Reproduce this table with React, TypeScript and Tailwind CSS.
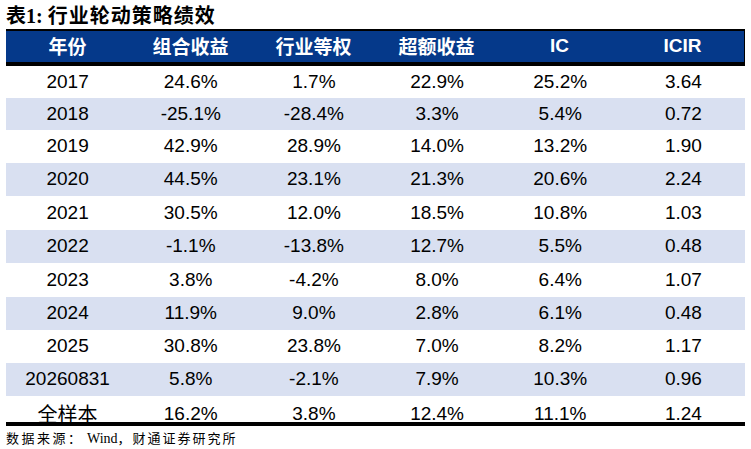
import React from "react";

const rows: { y: string; a: string; b: string; c: string; d: string; e: string; band: boolean; h: string }[] = [
  { y: "2017", a: "24.6%", b: "1.7%", c: "22.9%", d: "25.2%", e: "3.64", band: false, h: "h-[32px]" },
  { y: "2018", a: "-25.1%", b: "-28.4%", c: "3.3%", d: "5.4%", e: "0.72", band: true, h: "h-[32px]" },
  { y: "2019", a: "42.9%", b: "28.9%", c: "14.0%", d: "13.2%", e: "1.90", band: false, h: "h-[33px]" },
  { y: "2020", a: "44.5%", b: "23.1%", c: "21.3%", d: "20.6%", e: "2.24", band: true, h: "h-[33px]" },
  { y: "2021", a: "30.5%", b: "12.0%", c: "18.5%", d: "10.8%", e: "1.03", band: false, h: "h-[34px]" },
  { y: "2022", a: "-1.1%", b: "-13.8%", c: "12.7%", d: "5.5%", e: "0.48", band: true, h: "h-[33px]" },
  { y: "2023", a: "3.8%", b: "-4.2%", c: "8.0%", d: "6.4%", e: "1.07", band: false, h: "h-[34px]" },
  { y: "2024", a: "11.9%", b: "9.0%", c: "2.8%", d: "6.1%", e: "0.48", band: true, h: "h-[33px]" },
  { y: "2025", a: "30.8%", b: "23.8%", c: "7.0%", d: "8.2%", e: "1.17", band: false, h: "h-[33px]" },
  { y: "20260831", a: "5.8%", b: "-2.1%", c: "7.9%", d: "10.3%", e: "0.96", band: true, h: "h-[33px]" },
];

const cjk = "font-['Noto_Sans_CJK_SC',sans-serif]";
const num = "font-['Liberation_Sans','Noto_Sans_CJK_SC',sans-serif]";

export default function App() {
  return (
    <div className="w-[751px] h-[449px] bg-white overflow-hidden">
      <div className="h-[29px] pl-[6px] pt-[1px] leading-[28px] text-[20px] font-bold text-black whitespace-nowrap">
        <span className={cjk}>表</span>
        <span className="font-['Liberation_Serif',serif]">1: </span>
        <span className={`${cjk} tracking-[1px]`}>行业轮动策略绩效</span>
      </div>
      <div className="ml-[6px] w-[739px]">
        <div className="grid grid-cols-6 h-[37px] bg-[#05398a] border-t-2 border-b-4 border-r border-black text-white font-bold text-[19px]">
          {["年份", "组合收益", "行业等权", "超额收益"].map((t) => (
            <div key={t} className={`flex items-center justify-center ${cjk}`}>{t}</div>
          ))}
          <div className={`flex items-center justify-center ${num}`}>IC</div>
          <div className={`flex items-center justify-center ${num}`}>ICIR</div>
        </div>
        {rows.map((r) => (
          <div
            key={r.y}
            className={`grid grid-cols-6 ${r.h} ${r.band ? "bg-[#d9e0f1]" : "bg-white"} text-[19px] text-black ${num}`}
          >
            {[r.y, r.a, r.b, r.c, r.d, r.e].map((v, i) => (
              <div key={i} className="flex items-center justify-center">{v}</div>
            ))}
          </div>
        ))}
        <div className={`grid grid-cols-6 h-[30px] pt-[4px] border-b-4 border-black text-[19px] text-black ${num}`}>
          <div className={`flex items-center justify-center ${cjk} text-[20px] leading-[20px]`}>全样本</div>
          {["16.2%", "3.8%", "12.4%", "11.1%", "1.24"].map((v, i) => (
            <div key={i} className="flex items-center justify-center">{v}</div>
          ))}
        </div>
      </div>
      <div className="pl-[6px] mt-[4px] leading-[18px] text-[13px] text-black font-['Liberation_Serif','Noto_Sans_CJK_SC',serif] whitespace-nowrap">
        <span className="tracking-[2.5px]">数据来源：</span>
        <span className="text-[14px]"> Wind</span>
        <span className="tracking-[2px]">，财通证券研究所</span>
      </div>
    </div>
  );
}
